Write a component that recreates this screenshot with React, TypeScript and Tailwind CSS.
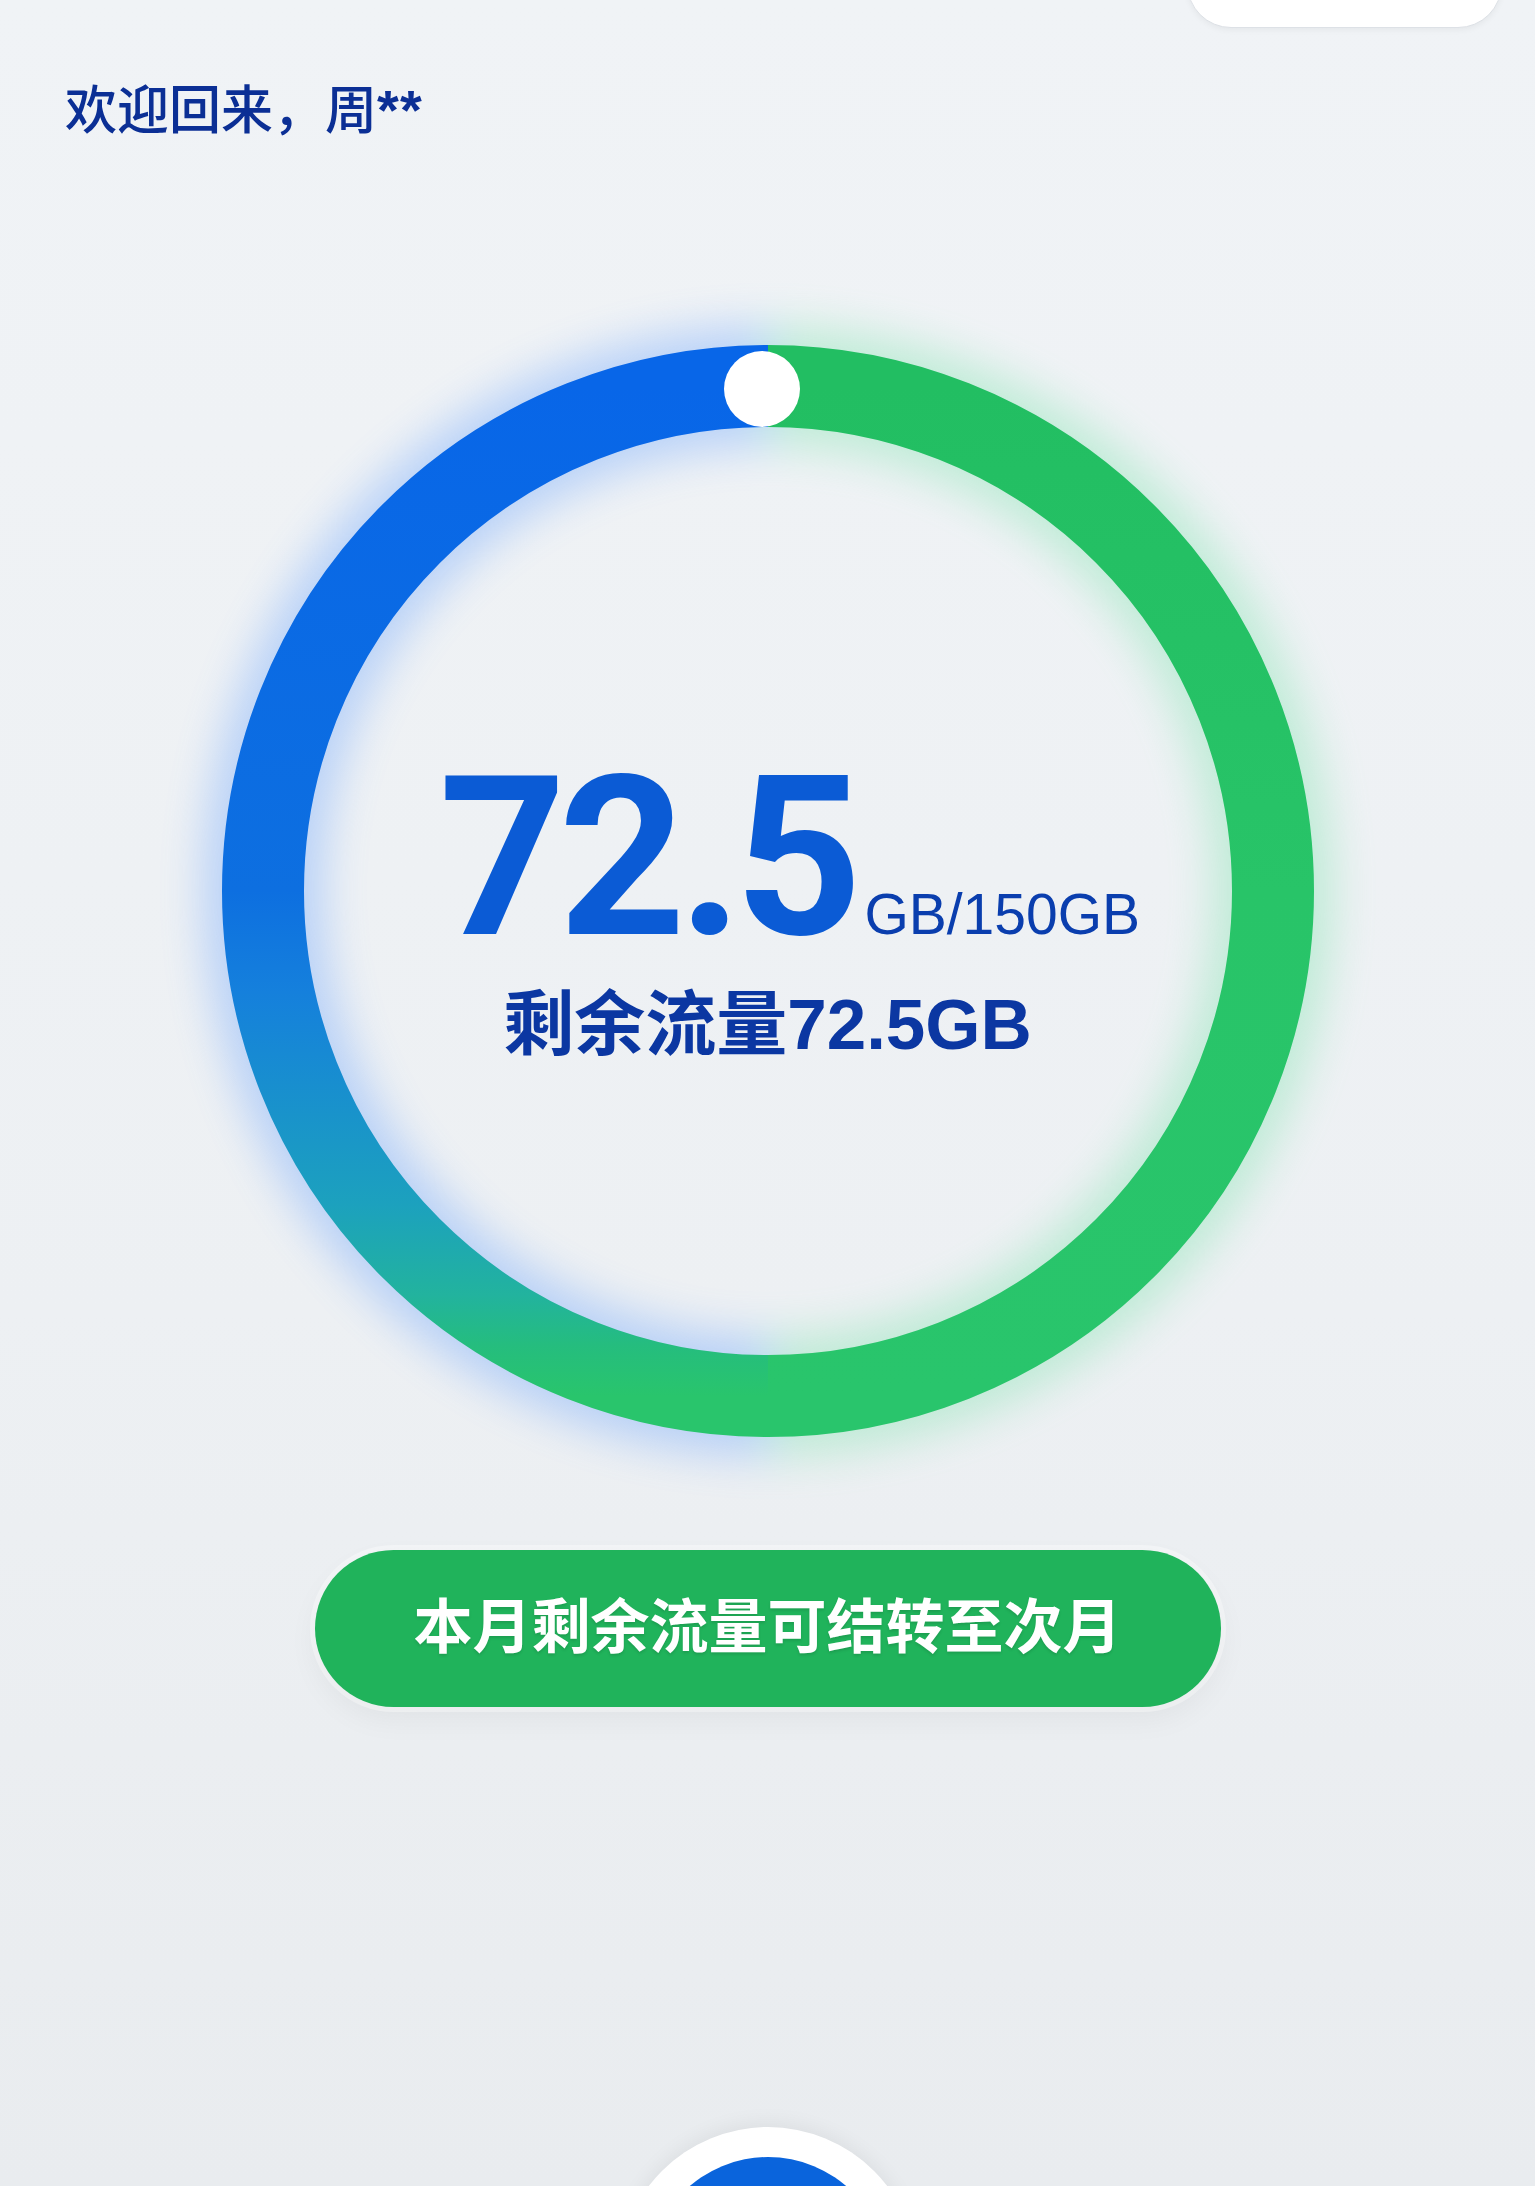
import React from "react"

const font = "font-['Liberation_Sans','Noto_Sans_CJK_SC',sans-serif]"

function UsageRing() {
    // ring: center 570,570 r 505, stroke 82
    return (
        <svg viewBox="0 0 1140 1140" className="absolute inset-0 w-full h-full overflow-visible">
            <defs>
                <linearGradient id="leftArc" gradientUnits="userSpaceOnUse" x1="0" y1="65" x2="0" y2="1075">
                    <stop offset="0" stopColor="#0866e8" />
                    <stop offset="0.5" stopColor="#0d6fe0" />
                    <stop offset="0.6" stopColor="#1580dc" />
                    <stop offset="0.81" stopColor="#1ca1be" />
                    <stop offset="0.9" stopColor="#22b39e" />
                    <stop offset="0.95" stopColor="#25bd7e" />
                    <stop offset="1" stopColor="#29c56c" />
                </linearGradient>
                <linearGradient id="rightArc" gradientUnits="userSpaceOnUse" x1="0" y1="65" x2="0" y2="1075">
                    <stop offset="0" stopColor="#22be62" />
                    <stop offset="0.5" stopColor="#28c468" />
                    <stop offset="1" stopColor="#29c56c" />
                </linearGradient>
                <filter id="glow" x="-20%" y="-20%" width="140%" height="140%">
                    <feGaussianBlur stdDeviation="22" />
                </filter>
            </defs>

            {/* soft glow */}
            <g filter="url(#glow)" opacity="0.32">
                <path d="M570 65 A505 505 0 0 0 570 1075" fill="none" stroke="#4a90ff" strokeWidth="120" />
                <path d="M570 65 A505 505 0 0 1 570 1075" fill="none" stroke="#5ee09a" strokeWidth="120" />
            </g>

            <path d="M570 65 A505 505 0 0 0 570 1075" fill="none" stroke="url(#leftArc)" strokeWidth="82" />
            <path d="M570 65 A505 505 0 0 1 570 1075" fill="none" stroke="url(#rightArc)" strokeWidth="82" />

            <circle cx="564" cy="68" r="38" fill="#ffffff" />
        </svg>
    )
}

export default function App() {
    return (
        <div className={`${font} w-full h-[2186px] overflow-hidden flex flex-col bg-[linear-gradient(180deg,#f0f3f6_0%,#edf0f3_60%,#e9ecef_100%)]`}>

            {/* top bar, cut off by the viewport */}
            <div className="flex justify-end pr-[33px] h-[28px] shrink-0">
                <div className="w-[315px] h-[90px] -mt-[62px] rounded-[44px] bg-white border border-[#dde1e6] shadow-[0_2px_6px_rgba(0,0,0,0.05)]" />
            </div>

            <h1 className="mt-[52px] pl-[65px] text-[52px] leading-[60px] font-medium text-[#0b2f95]">
                欢迎回来，周<span className="font-bold text-[56px] tracking-[0.02em]">**</span>
            </h1>

            {/* usage ring */}
            <div className="relative mt-[180px] w-[1140px] h-[1140px] mx-auto shrink-0">
                <UsageRing />
                <div className="relative flex flex-col items-center pt-[426px]">
                    <div className="w-full flex justify-center items-baseline pl-[44px]">
                        <span className="font-['Roboto','Liberation_Sans',sans-serif] text-[222px] leading-none font-bold tracking-[-0.035em] text-[#0b5bd5]">72.5</span>
                        <span className="ml-[10px] text-[57px] leading-none text-[#0a3eae]">GB/150GB</span>
                    </div>
                    <div className="mt-[13px] text-[71px] leading-[85px] font-semibold text-[#0b37a2]">
                        剩余流量72.5GB
                    </div>
                </div>
            </div>

            <button className="mt-[89px] mx-auto w-[906px] h-[157px] shrink-0 rounded-full bg-[#20b35b] flex items-center justify-center shadow-[0_0_0_5px_rgba(255,255,255,0.35),0_12px_30px_rgba(0,0,0,0.05)]">
                <span className="text-[59px] leading-none font-bold text-white [text-shadow:0_2px_3px_rgba(0,0,0,0.12)]">
                    本月剩余流量可结转至次月
                </span>
            </button>

            {/* floating action button, mostly below the fold */}
            <div className="mt-[420px] mx-auto w-[300px] h-[300px] shrink-0 rounded-full bg-white p-[30px] shadow-[0_-4px_20px_rgba(0,0,0,0.06)]">
                <div className="w-full h-full rounded-full bg-[#0a64dc]" />
            </div>
        </div>
    )
}
